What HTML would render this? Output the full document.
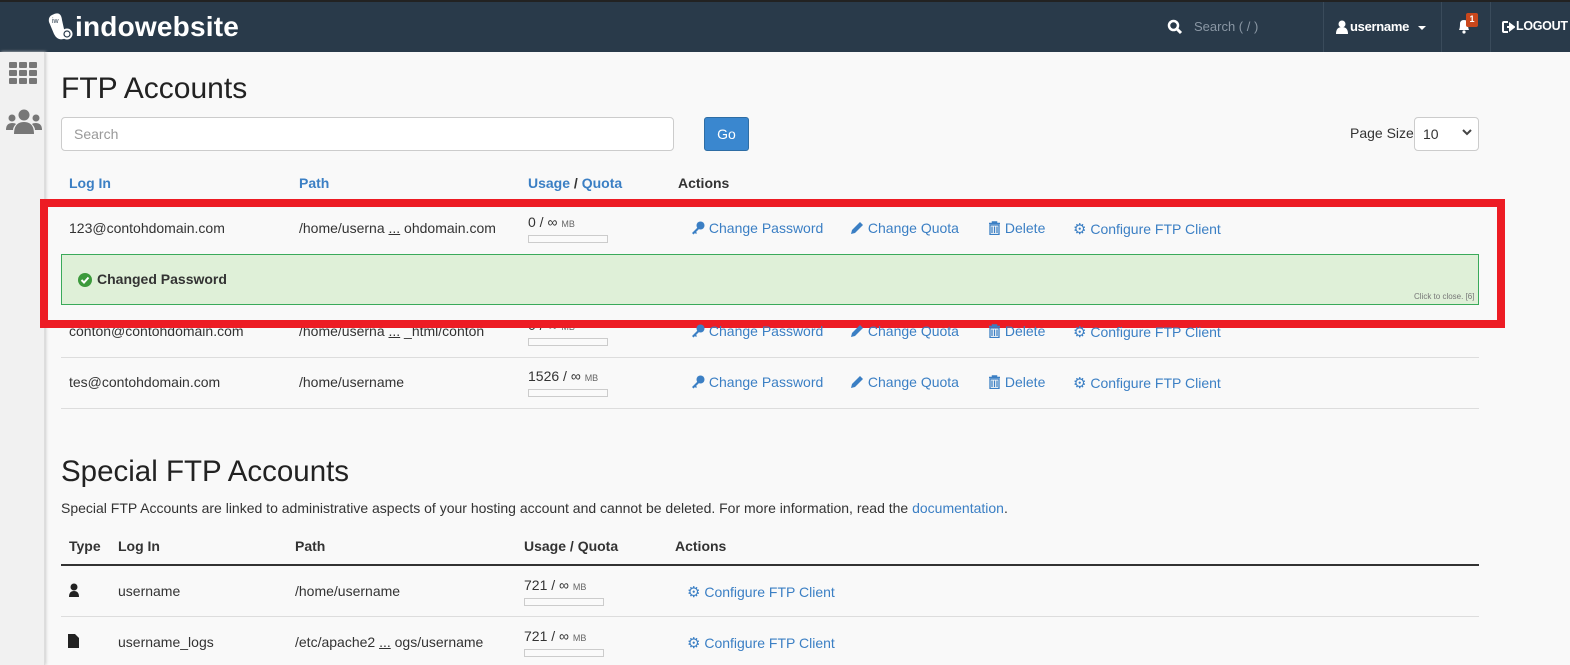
<!DOCTYPE html>
<html><head><meta charset="utf-8"><style>
*{box-sizing:border-box;margin:0;padding:0}
body{width:1570px;height:665px;overflow:hidden;background:#f9f9f9;font-family:"Liberation Sans",sans-serif;font-size:14px;color:#333;position:relative}
.a{position:absolute;white-space:nowrap}
.hdr{position:absolute;left:0;top:0;width:1570px;height:52px;background:#293a4a;border-top:2px solid #222}
.side{position:absolute;left:0;top:52px;width:45px;height:613px;background:#f1f1f1;border-right:1px solid #ddd;box-shadow:1px 0 3px #ccc}
.lnk{color:#3b7fc4}
.th{font-weight:bold}
.bar{position:absolute;width:80px;height:8px;border:1px solid #ccc;background:#fafafa}
.mb{font-size:9px;color:#666}
.line{position:absolute;height:1px;background:#ddd}
</style></head><body>
<div class="hdr">
 <svg class="a" style="left:48px;top:10px" width="26" height="30" viewBox="0 0 26 30"><path d="M4 3 Q13 -2 14 8 L18 26 Q10 30 6 22 L1 10 Q0 5 4 3Z" fill="#fff"/><text x="4" y="11" font-size="7" fill="#293a4a" font-family="Liberation Sans">iw</text><circle cx="19" cy="22" r="5.5" fill="#fff"/><circle cx="19" cy="22" r="3" fill="none" stroke="#293a4a" stroke-width="1.2"/></svg>
 <div class="a" style="left:75px;top:9px;font-size:28px;font-weight:bold;color:#fff;letter-spacing:0.2px">indowebsite</div>
 <svg class="a" style="left:1167px;top:17px" width="16" height="16" viewBox="0 0 16 16"><circle cx="6.5" cy="6.5" r="4.5" fill="none" stroke="#fff" stroke-width="2.5"/><path d="M10 10 L14 14" stroke="#fff" stroke-width="3"/></svg>
 <div class="a" style="left:1194px;top:17px;color:#8a97a4;font-size:13px">Search ( / )</div>
 <div class="a" style="left:1323px;top:0;width:1px;height:50px;background:#3a4b5b"></div>
 <svg class="a" style="left:1336px;top:18px" width="12" height="14" viewBox="0 0 12 14"><circle cx="6" cy="4" r="3.5" fill="#fff"/><path d="M0 14 Q0 7 6 7 Q12 7 12 14Z" fill="#fff"/></svg>
 <div class="a" style="left:1350px;top:17px;color:#fff;font-size:13px;font-weight:bold;letter-spacing:-0.3px">username</div>
 <div class="a" style="left:1418px;top:24px;border-left:4px solid transparent;border-right:4px solid transparent;border-top:4px solid #fff"></div>
 <div class="a" style="left:1441px;top:0;width:1px;height:50px;background:#3a4b5b"></div>
 <svg class="a" style="left:1456px;top:16px" width="16" height="16" viewBox="0 0 16 16"><path d="M3 12 Q4 10 4 6 Q4 2 8 2 Q12 2 12 6 Q12 10 13 12Z" fill="#fff"/><circle cx="8" cy="14" r="1.6" fill="#fff"/></svg>
 <div class="a" style="left:1466px;top:11px;width:12px;height:14px;background:#c9471c;color:#fff;font-size:9px;font-weight:bold;text-align:center;line-height:13px;border-radius:2px">1</div>
 <div class="a" style="left:1490px;top:0;width:1px;height:50px;background:#3a4b5b"></div>
 <svg class="a" style="left:1502px;top:19px" width="13" height="12" viewBox="0 0 13 12"><path d="M6 1 H2 Q1 1 1 2 V10 Q1 11 2 11 H6" fill="none" stroke="#fff" stroke-width="2"/><path d="M5 6 H10 M8 3 L12 6 L8 9Z" stroke="#fff" stroke-width="2" fill="#fff"/></svg>
 <div class="a" style="left:1516px;top:17px;color:#fff;font-size:12.5px;font-weight:bold;letter-spacing:-0.3px">LOGOUT</div>
</div>
<div class="side">
 <svg class="a" style="left:9px;top:10px" width="29" height="24" viewBox="0 0 29 24"><g fill="#777"><rect x="0" y="0" width="8" height="6" rx="1"/><rect x="10" y="0" width="8" height="6" rx="1"/><rect x="20" y="0" width="8" height="6" rx="1"/><rect x="0" y="8" width="8" height="6" rx="1"/><rect x="10" y="8" width="8" height="6" rx="1"/><rect x="20" y="8" width="8" height="6" rx="1"/><rect x="0" y="16" width="8" height="6" rx="1"/><rect x="10" y="16" width="8" height="6" rx="1"/><rect x="20" y="16" width="8" height="6" rx="1"/></g></svg>
 <svg class="a" style="left:6px;top:57px" width="36" height="26" viewBox="0 0 36 26"><g fill="#777"><circle cx="18" cy="6" r="5.5"/><circle cx="6" cy="9" r="3.5"/><circle cx="30" cy="9" r="3.5"/><path d="M8 25 Q8 13 18 13 Q28 13 28 25Z"/><path d="M0 21 Q0 14 6 14 Q9 14 10 15 Q7 18 7 21Z"/><path d="M36 21 Q36 14 30 14 Q27 14 26 15 Q29 18 29 21Z"/></g></svg>
</div>

<div class="a" style="left:61px;top:72px;font-size:30px;color:#222">FTP Accounts</div>
<div class="a" style="left:61px;top:117px;width:613px;height:34px;border:1px solid #ccc;border-radius:4px;background:#fff"></div>
<div class="a" style="left:74px;top:126px;color:#999;font-size:14px">Search</div>
<div class="a" style="left:704px;top:117px;width:45px;height:34px;background:#3a87cf;border:1px solid #2e6da4;border-radius:3px;color:#fff;text-align:center;line-height:32px;font-size:14px">Go</div>
<div class="a" style="left:1350px;top:125px">Page Size</div>
<div class="a" style="left:1414px;top:117px;width:65px;height:34px;border:1px solid #ccc;border-radius:4px;background:#fff;padding:8px 0 0 8px">10</div>
<svg class="a" style="left:1462px;top:129px" width="10" height="7" viewBox="0 0 10 7"><path d="M1 1 L5 5 L9 1" fill="none" stroke="#444" stroke-width="2"/></svg>

<div class="a th lnk" style="left:69px;top:175px">Log In</div>
<div class="a th lnk" style="left:299px;top:175px">Path</div>
<div class="a th" style="left:528px;top:175px"><span class="lnk">Usage</span> / <span class="lnk">Quota</span></div>
<div class="a th" style="left:678px;top:175px">Actions</div>
<div class="line" style="left:61px;top:203px;width:1418px;background:#ccc;height:2px"></div>

<div class="a" style="left:69px;top:220px">123@contohdomain.com</div>
<div class="a" style="left:299px;top:220px">/home/userna <u>...</u> ohdomain.com</div>
<div class="a" style="left:528px;top:214px">0 / ∞ <span class="mb">MB</span></div>
<div class="bar" style="left:528px;top:235px"></div>

<div class="a" style="left:61px;top:254px;width:1418px;height:51px;background:#dff0d8;border:1px solid #3aaa5a"></div>
<svg class="a" style="left:78px;top:273px" width="14" height="14" viewBox="0 0 14 14"><circle cx="7" cy="7" r="7" fill="#3c9a3c"/><path d="M3.5 7 L6 9.5 L10.5 4.5" fill="none" stroke="#fff" stroke-width="2"/></svg>
<div class="a" style="left:97px;top:271px;font-weight:bold">Changed Password</div>
<div class="a" style="left:1414px;top:292px;font-size:8px;color:#777">Click to close. [6]</div>

<div class="a" style="left:69px;top:323px">conton@contohdomain.com</div>
<div class="a" style="left:299px;top:323px">/home/userna <u>...</u> _html/conton</div>
<div class="a" style="left:528px;top:317px">0 / ∞ <span class="mb">MB</span></div>
<div class="bar" style="left:528px;top:338px"></div>
<div class="line" style="left:61px;top:357px;width:1418px"></div>
<div class="a" style="left:69px;top:374px">tes@contohdomain.com</div>
<div class="a" style="left:299px;top:374px">/home/username</div>
<div class="a" style="left:528px;top:368px">1526 / ∞ <span class="mb">MB</span></div>
<div class="bar" style="left:528px;top:389px"></div>
<div class="line" style="left:61px;top:408px;width:1418px"></div>

<div class="a" style="left:40px;top:199px;width:1465px;height:129px;border:8px solid #ed1c24"></div>

<div class="a" style="left:61px;top:455px;font-size:29.5px;color:#222">Special FTP Accounts</div>
<div class="a" style="left:61px;top:500px">Special FTP Accounts are linked to administrative aspects of your hosting account and cannot be deleted. For more information, read the <span class="lnk">documentation</span>.</div>
<div class="a th" style="left:69px;top:538px">Type</div>
<div class="a th" style="left:118px;top:538px">Log In</div>
<div class="a th" style="left:295px;top:538px">Path</div>
<div class="a th" style="left:524px;top:538px">Usage / Quota</div>
<div class="a th" style="left:675px;top:538px">Actions</div>
<div class="line" style="left:61px;top:564px;width:1418px;height:2px;background:#333"></div>

<svg class="a" style="left:68px;top:583px" width="12" height="14" viewBox="0 0 12 14"><circle cx="6" cy="4" r="3.5" fill="#222"/><path d="M1 14 Q1 8 6 8 Q11 8 11 14Z" fill="#222"/></svg>
<div class="a" style="left:118px;top:583px">username</div>
<div class="a" style="left:295px;top:583px">/home/username</div>
<div class="a" style="left:524px;top:577px">721 / ∞ <span class="mb">MB</span></div>
<div class="bar" style="left:524px;top:598px"></div>
<div class="line" style="left:61px;top:616px;width:1418px"></div>
<svg class="a" style="left:68px;top:634px" width="11" height="14" viewBox="0 0 11 14"><path d="M0 0 H7 L11 4 V14 H0Z" fill="#222"/></svg>
<div class="a" style="left:118px;top:634px">username_logs</div>
<div class="a" style="left:295px;top:634px">/etc/apache2 <u>...</u> ogs/username</div>
<div class="a" style="left:524px;top:628px">721 / ∞ <span class="mb">MB</span></div>
<div class="bar" style="left:524px;top:649px"></div>

<div class="a lnk" style="left:691px;top:220px"><svg width="14" height="14" viewBox="0 0 14 14" style="vertical-align:-2px"><circle cx="9.5" cy="4.5" r="4" fill="#3b7fc4"/><path d="M7 6 L1 12 L2.5 13.5 L4 12 L5 13 L6 12 L5 11 L8.5 7.5Z" fill="#3b7fc4"/></svg> Change Password</div>
<div class="a lnk" style="left:850px;top:220px"><svg width="14" height="14" viewBox="0 0 14 14" style="vertical-align:-2px"><path d="M1 13 L2 9 L10 1 L13 4 L5 12Z" fill="#3b7fc4"/></svg> Change Quota</div>
<div class="a lnk" style="left:988px;top:220px"><svg width="13" height="14" viewBox="0 0 13 14" style="vertical-align:-2px"><path d="M1 2.5 H12 M4.5 2.5 V1 H8.5 V2.5" stroke="#3b7fc4" stroke-width="1.5" fill="none"/><path d="M2 4 H11 V13.5 H2Z M4 5.5 V12 M6.5 5.5 V12 M9 5.5 V12" stroke="#3b7fc4" stroke-width="1.3" fill="none"/></svg> Delete</div>
<div class="a lnk" style="left:1073px;top:220px"><span style="font-size:15px">⚙</span> Configure FTP Client</div>

<div class="a lnk" style="left:691px;top:323px"><svg width="14" height="14" viewBox="0 0 14 14" style="vertical-align:-2px"><circle cx="9.5" cy="4.5" r="4" fill="#3b7fc4"/><path d="M7 6 L1 12 L2.5 13.5 L4 12 L5 13 L6 12 L5 11 L8.5 7.5Z" fill="#3b7fc4"/></svg> Change Password</div>
<div class="a lnk" style="left:850px;top:323px"><svg width="14" height="14" viewBox="0 0 14 14" style="vertical-align:-2px"><path d="M1 13 L2 9 L10 1 L13 4 L5 12Z" fill="#3b7fc4"/></svg> Change Quota</div>
<div class="a lnk" style="left:988px;top:323px"><svg width="13" height="14" viewBox="0 0 13 14" style="vertical-align:-2px"><path d="M1 2.5 H12 M4.5 2.5 V1 H8.5 V2.5" stroke="#3b7fc4" stroke-width="1.5" fill="none"/><path d="M2 4 H11 V13.5 H2Z M4 5.5 V12 M6.5 5.5 V12 M9 5.5 V12" stroke="#3b7fc4" stroke-width="1.3" fill="none"/></svg> Delete</div>
<div class="a lnk" style="left:1073px;top:323px"><span style="font-size:15px">⚙</span> Configure FTP Client</div>

<div class="a lnk" style="left:691px;top:374px"><svg width="14" height="14" viewBox="0 0 14 14" style="vertical-align:-2px"><circle cx="9.5" cy="4.5" r="4" fill="#3b7fc4"/><path d="M7 6 L1 12 L2.5 13.5 L4 12 L5 13 L6 12 L5 11 L8.5 7.5Z" fill="#3b7fc4"/></svg> Change Password</div>
<div class="a lnk" style="left:850px;top:374px"><svg width="14" height="14" viewBox="0 0 14 14" style="vertical-align:-2px"><path d="M1 13 L2 9 L10 1 L13 4 L5 12Z" fill="#3b7fc4"/></svg> Change Quota</div>
<div class="a lnk" style="left:988px;top:374px"><svg width="13" height="14" viewBox="0 0 13 14" style="vertical-align:-2px"><path d="M1 2.5 H12 M4.5 2.5 V1 H8.5 V2.5" stroke="#3b7fc4" stroke-width="1.5" fill="none"/><path d="M2 4 H11 V13.5 H2Z M4 5.5 V12 M6.5 5.5 V12 M9 5.5 V12" stroke="#3b7fc4" stroke-width="1.3" fill="none"/></svg> Delete</div>
<div class="a lnk" style="left:1073px;top:374px"><span style="font-size:15px">⚙</span> Configure FTP Client</div>

<div class="a lnk" style="left:687px;top:583px"><span style="font-size:15px">⚙</span> Configure FTP Client</div>
<div class="a lnk" style="left:687px;top:634px"><span style="font-size:15px">⚙</span> Configure FTP Client</div>
</body></html>
